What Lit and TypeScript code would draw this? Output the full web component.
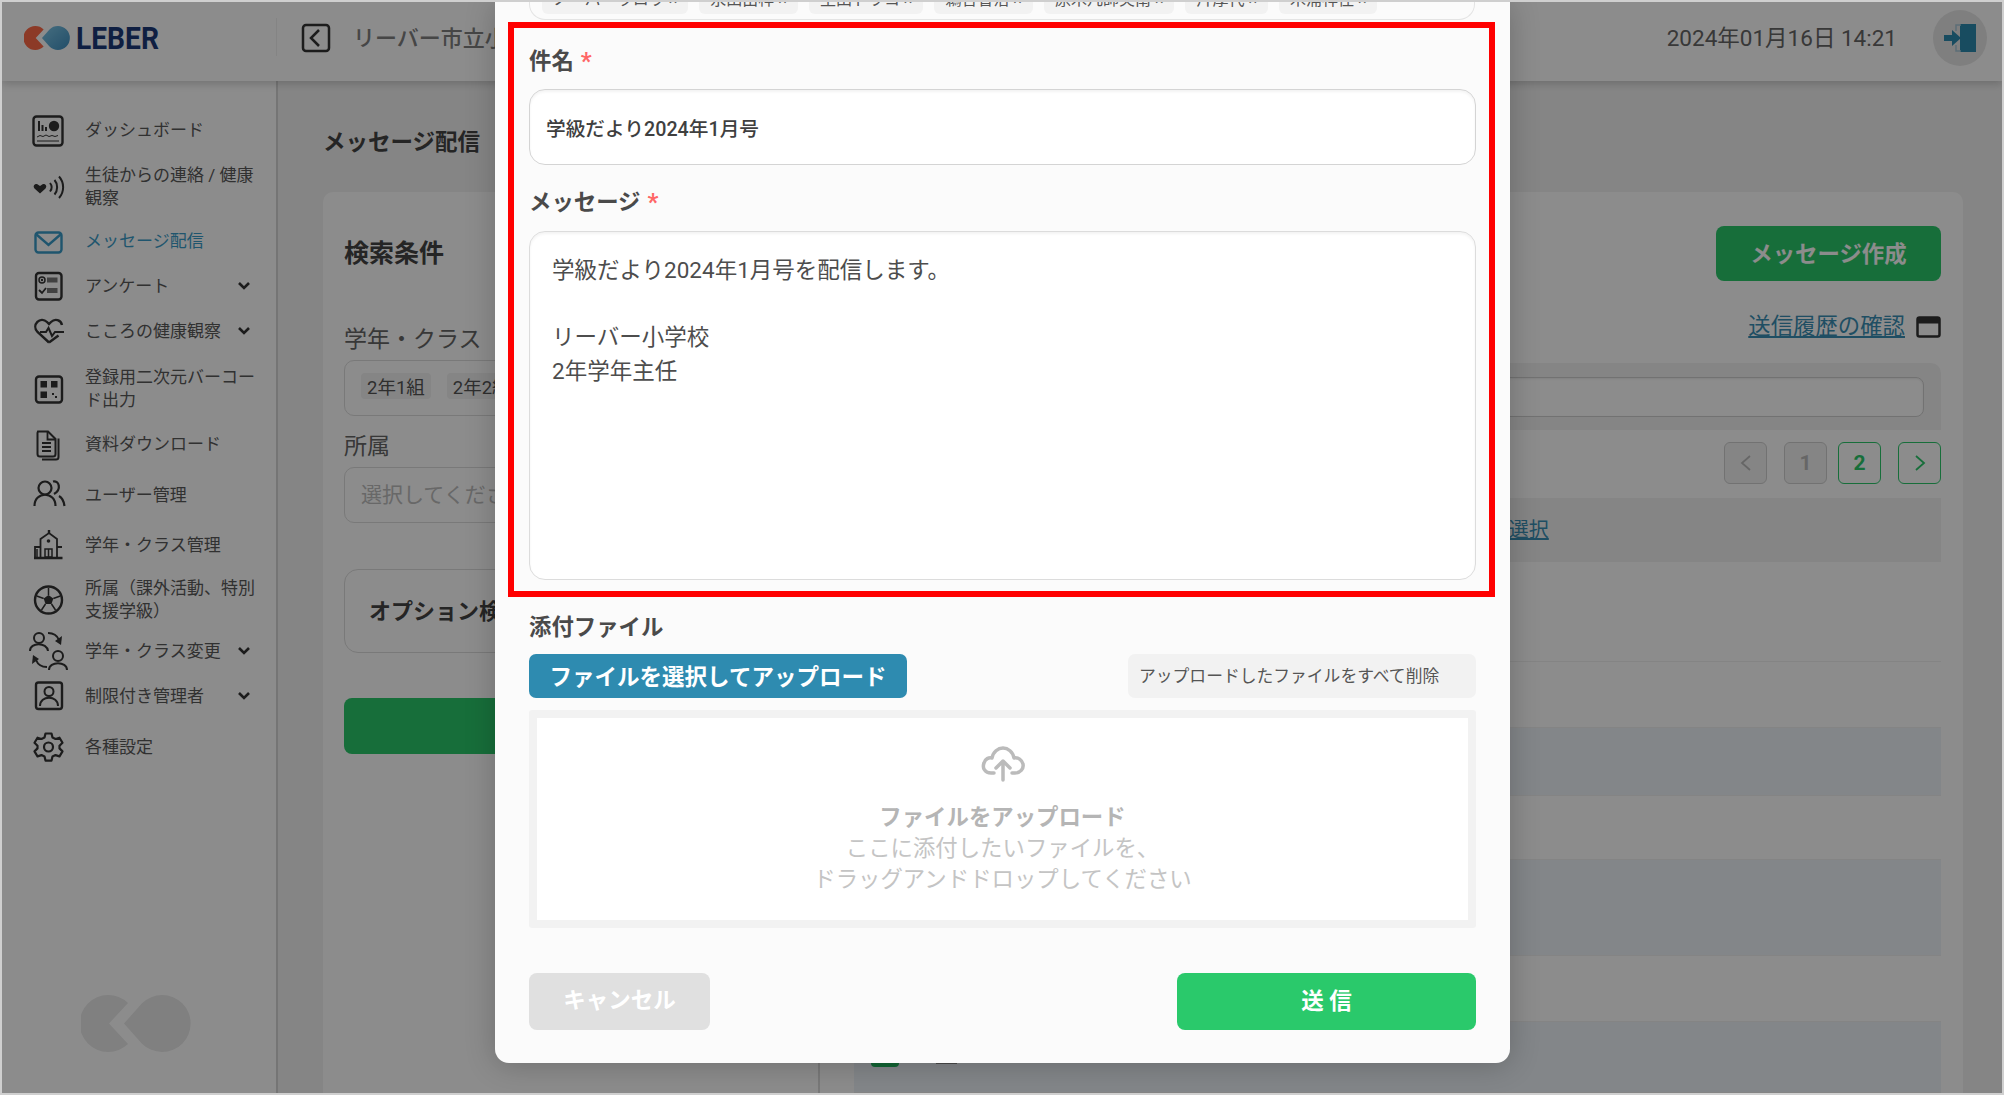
import { LitElement, html, css, svg } from "lit";
import { customElement } from "lit/decorators.js";

const logoShapes = (a: string, b: string) => svg`
  <path d="M47 8A28.5 28.5 0 1 0 47 49L28 28.5Z" fill=${a}></path>
  <path d="M43 28.5L61 8.3A28.5 28.5 0 1 1 61 48.7Z" fill=${b}></path>`;

const ICONS: Record<string, any> = {
  dash: svg`<rect x="4.5" y="5.5" width="29" height="29" rx="3" fill="none" stroke-width="2.4"></rect>
    <path d="M9 20V10h2v10zM12.5 20v-6h2v6zM16 20v-4h2v4z" fill="#333" stroke="none"></path>
    <circle cx="25" cy="15" r="5.2" fill="#333" stroke="none"></circle>
    <path d="M8 26l3-1.5 3 1 3-1.500 3 1.500 3-1 3 1 3-1" fill="none" stroke-width="1"></path>
    <path d="M8 30h22" fill="none" stroke-width="1"></path>`,
  wave: svg`<path d="M11 26.500l-5.500-5c-2.500-3 1.500-6 4-3.500l1.500 1 1.500-1c2.500-2.500 6.500 .5 4 3.500z" fill="#333" stroke="none"></path>
    <path d="M21 16c2 2.500 2 6 0 8.500M25.500 13c3.500 4 3.500 10.500 0 14.500M30 9.500c5.500 6 5.500 15.500 0 21.500" fill="none" stroke-width="2"></path>`,
  mail: svg`<rect x="6.500" y="10.500" width="26" height="20" rx="3" fill="none" stroke="#3a9cc8" stroke-width="2.400"></rect>
    <path d="M7.500 12.500L19.500 23l12-10.500" fill="none" stroke="#3a9cc8" stroke-width="2.400"></path>`,
  survey: svg`<rect x="7" y="7" width="25.500" height="26.500" rx="3" fill="none" stroke-width="2.400"></rect>
    <circle cx="13" cy="14" r="3" fill="none" stroke-width="1.500"></circle><circle cx="13" cy="14" r="1.200" fill="#333" stroke="none"></circle>
    <rect x="18" y="11.500" width="10.500" height="5" fill="#777" stroke="none"></rect>
    <path d="M10 24l3 3 4-5" fill="none" stroke-width="1.800"></path>
    <rect x="18" y="22" width="10.500" height="5" fill="#777" stroke="none"></rect>`,
  heart: svg`<path d="M20 31.500L8.500 21C2 14 11.500 4.500 18 11l2 2 2-2c4-4 10-2 11 3" fill="none" stroke-width="2.400"></path>
    <path d="M11 21h6l2.500-4 3.500 8 3-4h9" fill="none" stroke-width="2"></path><path d="M20 31.500l9.500-7" fill="none" stroke-width="2.400"></path>`,
  qr: svg`<rect x="7" y="7.500" width="26" height="26" rx="3" fill="none" stroke-width="2.400"></rect>
    <path d="M11.500 12h6.500v6.500h-6.500zM22 12h6.500v6.500H22zM11.500 22.500h6.500V29h-6.500zM23 24h2v2h-2zM26 27h2v2h-2z" fill="#333" stroke="none"></path>`,
  docs: svg`<path d="M9 7.500h10l7.500 7.500v15a2.500 2.500 0 0 1-2.500 2.500H11A2.500 2.500 0 0 1 8.500 30V9z" fill="none" stroke-width="2"></path>
    <path d="M18.500 8v7.500h7.500M13 19h9M13 23h9M13 27h9" fill="none" stroke-width="1.800"></path>
    <path d="M29.500 14.500V33a2.500 2.500 0 0 1-2.500 2.500H13" fill="none" stroke-width="2"></path>`,
  users: svg`<circle cx="16" cy="13" r="6.500" fill="none" stroke-width="2.200"></circle>
    <path d="M5.500 31c0-15 21-15 21 0" fill="none" stroke-width="2.200"></path>
    <path d="M24 6.500c6-1.500 9 8 1 12.500M30 21c3.500 2 5 6 5.500 10" fill="none" stroke-width="2.200"></path>`,
  school: svg`<path d="M6 32.500V22h5.500v10.500M28 32.500V22h5M11.500 32V14l8.500-6 8 6v18.500" fill="none" stroke-width="1.800"></path>
    <path d="M20 8V5M5 33h28.500" fill="none" stroke-width="2.400"></path><path d="M8 24v8M16 24h7v8h-7zM19.500 24v8" fill="none" stroke-width="1.500"></path>
    <circle cx="19.500" cy="16" r="1.800" fill="#333" stroke="none"></circle>`,
  ball: svg`<circle cx="19.500" cy="20" r="13.500" fill="none" stroke-width="2.400"></circle>
    <path d="M19.500 15l4.800 3.500-1.800 5.500h-6l-1.800-5.500z" fill="#333" stroke="none"></path>
    <path d="M19.500 15V8M24.300 18.500l7-2.500M22.500 24l4 6M16.500 24l-4 6M14.700 18.500l-7-2.500" fill="none" stroke-width="1.500"></path>`,
  swap: svg`<circle cx="10" cy="7" r="5" fill="none" stroke-width="2"></circle>
    <path d="M1 20c0-9 17-9 18 0" fill="none" stroke-width="2"></path>
    <circle cx="29" cy="25" r="5" fill="none" stroke-width="2"></circle>
    <path d="M20 39c0-9 18-9 18 0" fill="none" stroke-width="2"></path>
    <path d="M19 2c5 0 9 2 11 7" fill="none" stroke-width="2"></path><path d="M33 5l-1 9-6-4z" fill="#333" stroke="none"></path>
    <path d="M18 36c-5 0-9-2-11-7" fill="none" stroke-width="2"></path><path d="M3 33l1-9 6 4z" fill="#333" stroke="none"></path>`,
  portrait: svg`<rect x="7" y="6.500" width="26" height="26.500" rx="2.500" fill="none" stroke-width="2.400"></rect>
    <circle cx="20" cy="15.500" r="4.500" fill="none" stroke-width="2"></circle>
    <path d="M11 30c0-11 18-11 18 0" fill="none" stroke-width="2"></path>`,
  gear: svg`<circle cx="19.500" cy="20" r="4.500" fill="none" stroke-width="2.200"></circle>
    <path d="M16.500 6.500h6l1 4 3 1.500 4-1.300 3 5-3 3v2.700l3 3-3 5-4-1.300-3 1.500-1 4h-6l-1-4-3-1.500-4 1.300-3-5 3-3v-2.700l-3-3 3-5 4 1.300 3-1.500z" fill="none" stroke-width="2.200" stroke-linejoin="round"></path>`,
};

const NAV = [
  { label: "ダッシュボード", icon: "dash", h: 53 },
  { label: "生徒からの連絡 / 健康観察", icon: "wave", h: 60 },
  { label: "メッセージ配信", icon: "mail", h: 49, active: true },
  { label: "アンケート", icon: "survey", h: 40, more: true },
  { label: "こころの健康観察", icon: "heart", h: 50, more: true },
  { label: "登録用二次元バーコード出力", icon: "qr", h: 66 },
  { label: "資料ダウンロード", icon: "docs", h: 44 },
  { label: "ユーザー管理", icon: "users", h: 58 },
  { label: "学年・クラス管理", icon: "school", h: 42 },
  { label: "所属（課外活動、特別支援学級）", icon: "ball", h: 68 },
  { label: "学年・クラス変更", icon: "swap", h: 34, more: true },
  { label: "制限付き管理者", icon: "portrait", h: 56, more: true },
  { label: "各種設定", icon: "gear", h: 46 },
];

const CHIPS = ["ノーバーラロウ ×", "永田由梓 ×", "生田トウコ ×", "鵜合香治 ×", "原木凡師実南 ×", "片厚代 ×", "木浦祥佳 ×"];
const ROWS = ["r1", "r2", "r3 blue", "r4", "r5 blue", "r6", "r7 blue"];

@customElement("app-root")
export class AppRoot extends LitElement {
  static styles = css`
    :host { display: block; position: relative; width: 2004px; height: 1095px; box-sizing: border-box;
      border: 2px solid #cfcfcf; overflow: hidden; background: #fff;
      font-family: Roboto, "Noto Sans CJK JP", sans-serif; color: #555; }
    .page { display: flex; flex-direction: column; height: 100%; }
    .header { flex: none; height: 79px; box-sizing: border-box; padding-bottom: 7px; display: flex; align-items: center; background: #fff; position: relative; z-index: 1; box-shadow: 0 3px 8px rgba(0,0,0,.18); }
    .brand { width: 275px; height: 100%; box-sizing: border-box; padding-left: 22px; display: flex; align-items: center; gap: 6px; position: relative; }
    .brand::after { content: ""; position: absolute; right: 0; top: 16px; height: 38px; width: 1px; background: #f0f0f0; }
    .brand svg { width: 46px; height: 24px; }
    .wordmark { font-size: 32px; font-weight: 700; color: #1c3a78; line-height: 1; display: inline-block; transform: scaleX(.88); transform-origin: left center; }
    .back { width: 30px; height: 30px; margin-left: 24px; flex: none; }
    .school { margin: 0 0 4px 22px; font-size: 22px; font-weight: 500; color: #808080; white-space: nowrap; width: 300px; }
    .hselect { width: 617px; height: 38px; box-sizing: border-box; border: 1px solid #e2e2e2; border-radius: 6px; flex: none; box-shadow: 0 1px 4px rgba(0,0,0,.12); }
    .date { margin: 0 36px 4px auto; font-size: 22.500px; color: #666; white-space: nowrap; }
    .logout { width: 54px; height: 56px; border-radius: 50%; background: #e8e8e8; margin-right: 15px; display: flex; align-items: center; justify-content: center; flex: none; }
    .logout svg { width: 34px; height: 30px; }
    .body { flex: 1; display: flex; min-height: 0; }
    .side { width: 274px; flex: none; box-sizing: content-box; border-right: 2px solid #d6d6d6; background: #fff; padding-top: 23px; position: relative; }
    .nav { display: flex; align-items: center; padding-left: 27px; box-sizing: border-box; font-size: 17px; line-height: 23px; color: #595959; }
    .nav svg.ic { width: 40px; height: 40px; flex: none; stroke: #333; margin-right: 16px; overflow: visible; }
    .nav.active { color: #3a9cc8; }
    .nav .lbl { width: 172px; flex: none; }
    .nav .chev { width: 14px; height: 10px; margin-left: -20px; flex: none; }
    .wm { position: absolute; left: 79px; bottom: 41px; width: 110px; height: 57px; }
    .main { flex: 1; min-width: 0; background: #f3f3f3; padding: 0 39px 0 45px; display: flex; flex-direction: column; }
    .ptitle { flex: none; height: 111px; box-sizing: border-box; padding-top: 44px; font-size: 22.500px; line-height: 34px; font-weight: 700; color: #444; }
    .card { flex: 1; display: flex; background: #fff; border-radius: 10px 10px 0 0; min-height: 0; }
    .left { width: 497px; flex: none; box-sizing: border-box; border-right: 2px solid #dcdcdc; padding: 44px 23px 0 21px; }
    .left h3 { margin: 0; font-size: 25px; line-height: 36px; font-weight: 700; color: #444; }
    .flabel { font-size: 23px; line-height: 30px; color: #666; }
    .flabel.first { margin-top: 53px; }
    .flabel.next { margin-top: 16px; }
    .box { height: 56px; box-sizing: border-box; margin-top: 5px; border: 1px solid #ddd; border-radius: 10px; padding: 0 16px 5px; display: flex; align-items: center; gap: 16px; font-size: 19px; }
    .tag { background: #f2f2f2; height: 26px; padding: 0 6px; border-radius: 4px; display: flex; align-items: center; font-size: 18.500px; white-space: nowrap; color: #555; }
    .ph { color: #bdbdbd; font-size: 21px; white-space: nowrap; }
    .opt { margin-top: 46px; height: 84px; box-sizing: border-box; border: 1px solid #ddd; border-radius: 14px; padding: 0 0 5px 24px; display: flex; align-items: center; font-size: 22px; font-weight: 700; color: #444; white-space: nowrap; }
    .go { margin-top: 45px; height: 56px; border-radius: 8px; background: #2ac96b; }
    .right { flex: 1; min-width: 0; box-sizing: border-box; padding: 34px 22px 0 34px; display: flex; flex-direction: column; }
    .create { align-self: flex-end; width: 225px; height: 55px; box-sizing: border-box; padding-bottom: 3px; border-radius: 8px; background: #2ac96b; color: #fff; font-size: 22.400px; font-weight: 700; display: flex; align-items: center; justify-content: center; }
    .hist { align-self: flex-end; height: 30px; margin-top: 30px; display: flex; align-items: center; gap: 11px; font-size: 22.400px; color: #3a8fb5; }
    .hist a { text-decoration: underline; color: inherit; margin-bottom: 4px; }
    .all a { text-decoration: underline; color: inherit; margin-bottom: 4px; }
    .hist svg { width: 25px; height: 22px; margin-top: 1px; }
    .bar { margin-top: 22px; height: 67px; box-sizing: border-box; padding: 14px 17px 13px 14px; background: #f3f3f3; border-radius: 10px 10px 0 0; }
    .bar div { height: 100%; box-sizing: border-box; background: #fff; border: 1px solid #cfcfcf; border-radius: 8px; box-shadow: inset 0 1px 2px rgba(0,0,0,.08); }
    .pager { margin-top: 12px; height: 42px; display: flex; justify-content: flex-end; }
    .pg { width: 43px; height: 42px; box-sizing: border-box; border: 1.500px solid #cfcfcf; border-radius: 6px; background: #f3f3f3; color: #bbb; display: flex; align-items: center; justify-content: center; font-size: 21px; font-weight: 700; margin-left: 17px; }
    .pg.near { margin-left: 11px; }
    .pg.on { border-color: #2ac96b; color: #2ac96b; background: #fff; }
    .pg svg { width: 14px; height: 20px; }
    .all { margin-top: 14px; height: 64px; box-sizing: border-box; padding-left: 597px; background: #f2f2f2; display: flex; align-items: center; font-size: 20px; color: #3a8fb5; white-space: nowrap; }
    .rows { flex: 1; min-height: 0; box-shadow: inset -9px 0 8px -7px rgba(0,0,0,.22); position: relative; }
    .row { box-sizing: border-box; border-bottom: 1px solid #f0f0f0; background: #fff; display: flex; align-items: flex-start; gap: 37px; padding: 18px 0 0 17px; }
    .row.blue { background: #eef5fa; }
    .r1 { height: 100px; } .r2 { height: 66px; } .r3 { height: 68px; } .r4 { height: 64px; } .r5 { height: 96px; } .r6 { height: 66px; } .r7 { height: 71px; }
    .cb { width: 28px; height: 27px; border-radius: 4px; background: #1fb860; }
    .gr { width: 21px; height: 24px; background: #888; }
    .ov { position: absolute; inset: 0; background: rgba(0,0,0,.45); z-index: 2; }
    .modal { position: absolute; left: 493px; top: 0; width: 1015px; height: 1061px; box-sizing: border-box; z-index: 3; background: #fbfbfb; border-radius: 0 0 14px 14px; box-shadow: 0 2px 30px rgba(0,0,0,.22); overflow: hidden; }
    .to { height: 18px; box-sizing: border-box; margin: 0 35px 2px 34px; border: 1px solid #e4e4e4; border-top: none; border-radius: 0 0 16px 16px; display: flex; align-items: flex-end; overflow: hidden; padding: 0 12px 5px 12px; gap: 11px; }
    .chip { flex: none; height: 40px; background: #f2f2f2; border-radius: 6px; padding: 0 11px 3px; display: flex; align-items: flex-end; font-size: 16px; line-height: 22px; color: #555; white-space: nowrap; box-sizing: border-box; }
    .red { margin: 0 15px 0 13px; border: 6px solid #f00; padding: 17px 13px 11px 15px; }
    .lab { font-size: 22.400px; line-height: 32px; font-weight: 700; color: #4a4a4a; display: flex; }
    .lab b { color: #f66; margin-left: 7px; font-weight: 700; font-size: 24px; }
    .lab.msg { margin-top: 21px; }
    .inp { margin-top: 12px; height: 76px; box-sizing: border-box; background: #fff; border: 1.500px solid #d4d4d4; border-radius: 16px; box-shadow: inset 0 2px 3px rgba(0,0,0,.05); padding-left: 16px; display: flex; align-items: center; font-size: 19.700px; font-weight: 500; color: #3f3f3f; }
    .ta { margin-top: 13px; height: 349px; box-sizing: border-box; background: #fff; border: 1.500px solid #dcdcdc; border-radius: 16px; box-shadow: inset 0 2px 3px rgba(0,0,0,.05); padding: 22px 22px; font-size: 22.500px; line-height: 33.600px; color: #4d4d4d; }
    .lower { padding: 14px 34px 33px 34px; }
    .acts { margin-top: 11px; display: flex; justify-content: space-between; }
    .up { width: 378px; height: 44px; box-sizing: border-box; padding-bottom: 3px; border-radius: 7px; background: #2e8bb0; color: #fff; font-size: 22.500px; font-weight: 700; display: flex; align-items: center; justify-content: center; white-space: nowrap; }
    .del { width: 348px; height: 44px; box-sizing: border-box; padding: 0 0 2px 11px; border-radius: 7px; background: #f2f2f2; font-size: 16.800px; color: #555; display: flex; align-items: center; white-space: nowrap; }
    .drop { margin-top: 12px; height: 218px; box-sizing: border-box; padding: 8px 8px; background: #f2f2f2; border-radius: 3px; }
    .drop-in { height: 100%; background: #fff; display: flex; flex-direction: column; align-items: center; padding-top: 27px; box-sizing: border-box; color: #c4c4c4; font-size: 22.400px; line-height: 31px; }
    .drop-in svg { width: 44px; height: 38px; margin-bottom: 19px; }
    .drop-in strong { color: #b5b5b5; font-weight: 700; }
    .foot { margin-top: 45px; display: flex; justify-content: space-between; }
    .cancel, .send { height: 57px; box-sizing: border-box; border-radius: 8px; color: #fff; font-size: 22.500px; font-weight: 700; display: flex; align-items: center; justify-content: center; }
    .cancel { width: 181px; background: #e0e0e0; padding-bottom: 8px; }
    .send { width: 299px; background: #2ac96b; padding-bottom: 5px; }
  `;

  render() {
    return html`
      <div class="page">
        <div class="header">
          <div class="brand">
            <svg viewBox="0 0 110 57">
              <defs><linearGradient id="lg" x1="0" x2="1" y1="0" y2="1"><stop offset="0" stop-color="#7fc8e8"></stop><stop offset="1" stop-color="#3f8fc0"></stop></linearGradient></defs>
              ${logoShapes("#ff6a48", "url(#lg)")}
            </svg>
            <span class="wordmark">LEBER</span>
          </div>
          <svg class="back" viewBox="0 0 30 30" fill="none" stroke="#333" stroke-width="2.500"><rect x="2" y="2" width="26" height="26" rx="3"></rect><path d="M18 7l-8 8 8 8"></path></svg>
          <div class="school">リーバー市立小学校</div>
          <div class="hselect"></div>
          <div class="date">2024年01月16日 14:21</div>
          <div class="logout">
            <svg viewBox="0 0 34 30"><path d="M17 1L33 1V29L17 29Z" fill="#2c8ab0"></path><path d="M1 12H9V7L18 15 9 23V18H1Z" fill="#2c8ab0"></path><path d="M18 2h-5v6M13 22v6h5" fill="none" stroke="#a8c8d8" stroke-width="1.500"></path></svg>
          </div>
        </div>
        <div class="body">
          <div class="side">
            ${NAV.map((n) => html`
              <div class="nav ${n.active ? "active" : ""}" style="height:${n.h}px">
                <svg class="ic" viewBox="0 0 40 40">${ICONS[n.icon]}</svg>
                <span class="lbl">${n.label}</span>
                ${n.more ? html`<svg class="chev" viewBox="0 0 14 10" fill="none" stroke="#333" stroke-width="2.600"><path d="M2 2l5 5 5-5"></path></svg>` : ""}
              </div>`)}
            <svg class="wm" viewBox="0 0 110 57">${logoShapes("#e9e9e9", "#e9e9e9")}</svg>
          </div>
          <div class="main">
            <div class="ptitle">メッセージ配信</div>
            <div class="card">
              <div class="left">
                <h3>検索条件</h3>
                <div class="flabel first">学年・クラス</div>
                <div class="box"><span class="tag">2年1組</span><span class="tag">2年2組</span></div>
                <div class="flabel next">所属</div>
                <div class="box"><span class="ph">選択してください</span></div>
                <div class="opt">オプション検索</div>
                <div class="go"></div>
              </div>
              <div class="right">
                <div class="create">メッセージ作成</div>
                <div class="hist"><a>送信履歴の確認</a>
                  <svg viewBox="0 0 25 22"><rect x="1.500" y="1.500" width="22" height="19" rx="2" fill="none" stroke="#333" stroke-width="2.500"></rect><rect x="1.500" y="1.500" width="22" height="6" fill="#333"></rect></svg>
                </div>
                <div class="bar"><div></div></div>
                <div class="pager">
                  <div class="pg"><svg viewBox="0 0 14 20" fill="none" stroke="#bbb" stroke-width="1.800"><path d="M11 3L3 10l8 7"></path></svg></div>
                  <div class="pg">1</div>
                  <div class="pg near on">2</div>
                  <div class="pg on"><svg viewBox="0 0 14 20" fill="none" stroke="#2ac96b" stroke-width="1.800"><path d="M3 3l8 7-8 7"></path></svg></div>
                </div>
                <div class="all"><a>すべて選択</a></div>
                <div class="rows">
                  ${ROWS.map((r, i) => html`<div class="row ${r}">${i === 6 ? html`<span class="cb"></span><span class="gr"></span>` : ""}</div>`)}
                </div>
              </div>
            </div>
          </div>
        </div>
      </div>
      <div class="ov"></div>
      <div class="modal">
        <div class="to">${CHIPS.map((c) => html`<span class="chip">${c}</span>`)}</div>
        <div class="red">
          <div class="lab">件名<b>*</b></div>
          <div class="inp">学級だより2024年1月号</div>
          <div class="lab msg">メッセージ<b>*</b></div>
          <div class="ta">学級だより2024年1月号を配信します。<br><br>リーバー小学校<br>2年学年主任</div>
        </div>
        <div class="lower">
          <div class="lab">添付ファイル</div>
          <div class="acts">
            <div class="up">ファイルを選択してアップロード</div>
            <div class="del">アップロードしたファイルをすべて削除</div>
          </div>
          <div class="drop">
            <div class="drop-in">
              <svg viewBox="0 0 44 38" fill="none" stroke="#bbb" stroke-width="3.500" stroke-linecap="round" stroke-linejoin="round">
                <path d="M13 28H10C4 28 1 23 3 18c1-4 5-6 8-5C12 7 17 3 22 3s10 4 11 10c4-1 8 2 9 6 1 5-3 9-8 9h-3"></path>
                <path d="M22 35V17M15 23l7-7 7 7"></path>
              </svg>
              <strong>ファイルをアップロード</strong>
              <span>ここに添付したいファイルを、</span>
              <span>ドラッグアンドドロップしてください</span>
            </div>
          </div>
          <div class="foot">
            <div class="cancel">キャンセル</div>
            <div class="send">送 信</div>
          </div>
        </div>
      </div>
    `;
  }
}
